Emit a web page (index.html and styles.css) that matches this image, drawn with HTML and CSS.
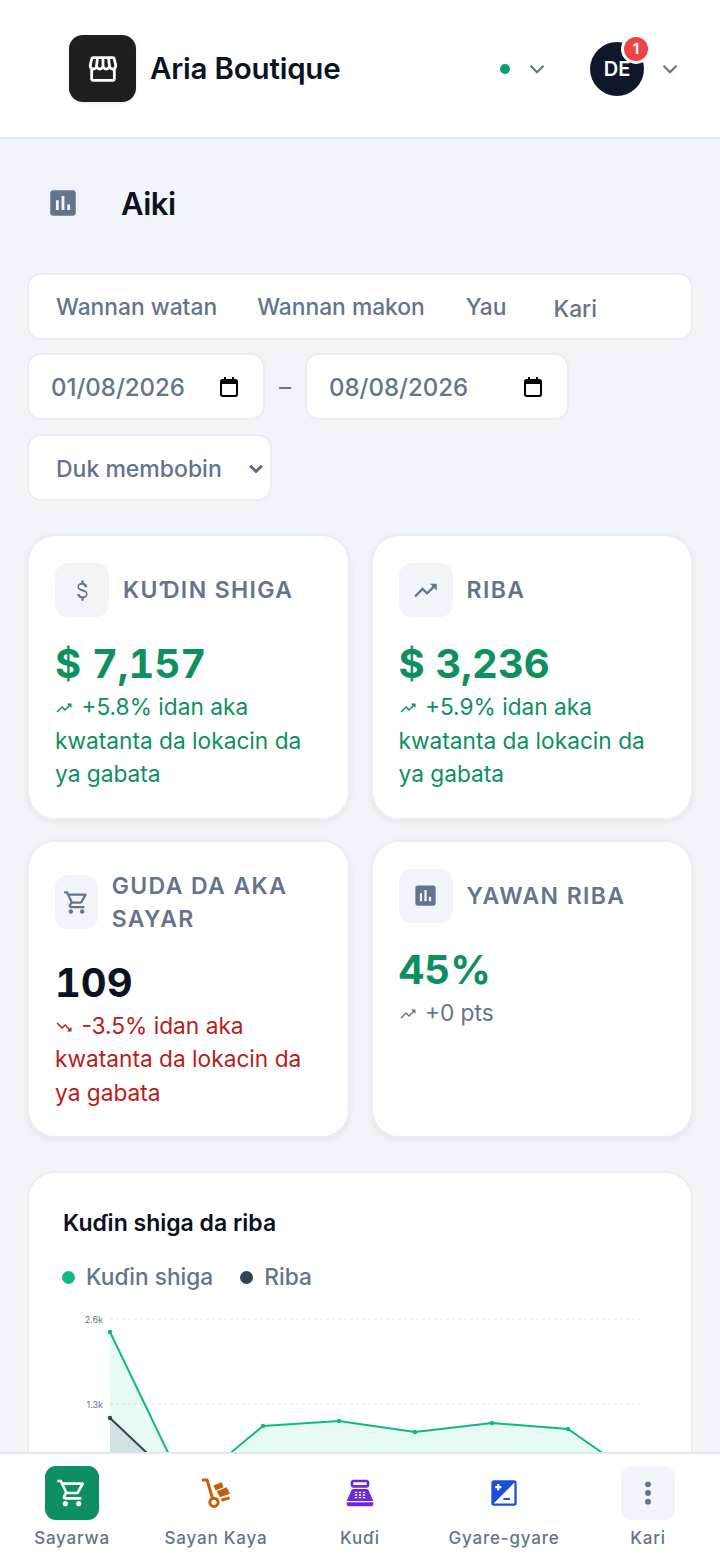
FILE: index.html
```html
<!DOCTYPE html>
<html lang="en">
<head>
    <meta charset="UTF-8">
    <meta name="viewport" content="width=device-width, initial-scale=1.0">
    <title>Aria Boutique</title>
    <link rel="stylesheet" href="styles.css">
</head>
<body>
    <header class="top-bar">
        <div class="brand">
            <div class="brand-logo">
                <svg viewBox="0 0 24 24" class="icon-store"><path d="M21.9 8.89l-1.05-4.37c-.22-.9-1-1.52-1.91-1.52H5.05c-.9 0-1.69.63-1.9 1.52L2.1 8.89c-.24 1.02-.02 2.06.62 2.88.08.11.19.19.28.29V19c0 1.1.9 2 2 2h14c1.1 0 2-.9 2-2v-6.94c.09-.09.2-.18.28-.28.64-.82.87-1.87.62-2.89zm-2.99-3.9l1.05 4.37c.1.42.01.84-.25 1.17-.14.18-.44.47-.94.47-.61 0-1.14-.49-1.21-1.14L16.98 5l1.93-.01zM13 5h1.96l.54 4.52c.05.39-.07.78-.33 1.07-.22.26-.54.41-.95.41-.67 0-1.22-.59-1.22-1.31V5zM8.49 9.52L9.04 5H11v4.69c0 .72-.55 1.31-1.29 1.31-.34 0-.65-.15-.89-.41-.25-.29-.37-.68-.33-1.07zm-4.45-.16L5.05 5h1.97l-.58 4.86c-.08.65-.6 1.14-1.21 1.14-.49 0-.8-.29-.93-.47-.27-.32-.36-.75-.26-1.17zM5 19v-6.03c.08.01.15.03.23.03.87 0 1.66-.36 2.24-.95.6.6 1.4.95 2.31.95.87 0 1.65-.36 2.23-.93.59.57 1.39.93 2.29.93.84 0 1.64-.35 2.24-.95.58.59 1.37.95 2.24.95.08 0 .15-.02.23-.03V19H5z"/></svg>
            </div>
            <span class="brand-name">Aria Boutique</span>
        </div>
        <div class="status">
            <span class="status-dot"></span>
            <svg viewBox="0 0 24 24" class="chevron"><polyline points="6 9 12 15 18 9"/></svg>
        </div>
        <div class="account">
            <div class="avatar">DE<span class="badge">1</span></div>
            <svg viewBox="0 0 24 24" class="chevron"><polyline points="6 9 12 15 18 9"/></svg>
        </div>
    </header>

    <main class="page">
        <div class="page-title">
            <div class="title-icon">
                <svg viewBox="0 0 24 24" class="icon-title"><path d="M19 3H5c-1.1 0-2 .9-2 2v14c0 1.1.9 2 2 2h14c1.1 0 2-.9 2-2V5c0-1.1-.9-2-2-2zM9 17H7v-7h2v7zm4 0h-2V7h2v10zm4 0h-2v-4h2v4z"/></svg>
            </div>
            <h1>Aiki</h1>
        </div>

        <div class="range-tabs">
            <span class="tab">Wannan watan</span>
            <span class="tab">Wannan makon</span>
            <span class="tab">Yau</span>
            <span class="tab tab-more">Kari</span>
        </div>

        <div class="date-row">
            <div class="date-field date-from">
                <span>01/08/2026</span>
                <svg viewBox="0 0 24 24" class="icon-cal"><path d="M7 2v2H5.5C4.1 4 3 5.1 3 6.5v13C3 20.9 4.1 22 5.5 22h13c1.4 0 2.5-1.1 2.5-2.5v-13C21 5.1 19.9 4 18.5 4H17V2h-2v2H9V2H7zM5 9h14v10.5c0 .3-.2.5-.5.5h-13c-.3 0-.5-.2-.5-.5V9z"/></svg>
            </div>
            <span class="date-sep">–</span>
            <div class="date-field date-to">
                <span>08/08/2026</span>
                <svg viewBox="0 0 24 24" class="icon-cal"><path d="M7 2v2H5.5C4.1 4 3 5.1 3 6.5v13C3 20.9 4.1 22 5.5 22h13c1.4 0 2.5-1.1 2.5-2.5v-13C21 5.1 19.9 4 18.5 4H17V2h-2v2H9V2H7zM5 9h14v10.5c0 .3-.2.5-.5.5h-13c-.3 0-.5-.2-.5-.5V9z"/></svg>
            </div>
        </div>

        <div class="select-wrap">
            <select class="shop-select">
                <option>Duk membobin</option>
            </select>
            <svg viewBox="0 0 24 24" class="select-arrow"><polyline points="5 8 12 15 19 8"/></svg>
        </div>

        <section class="stat-grid">
            <div class="stat-card">
                <div class="stat-head">
                    <div class="stat-icon">
                        <svg viewBox="0 0 24 24"><path d="M11.8 10.9c-2.27-.59-3-1.2-3-2.15 0-1.09 1.01-1.85 2.7-1.85 1.78 0 2.44.85 2.5 2.1h2.21c-.07-1.72-1.12-3.3-3.21-3.81V3h-2v2.16c-1.94.42-3.5 1.68-3.5 3.61 0 2.31 1.91 3.46 4.7 4.13 2.5.6 3 1.48 3 2.41 0 .69-.49 1.79-2.7 1.79-2.06 0-2.87-.92-2.98-2.1h-2.2c.12 2.19 1.76 3.42 3.68 3.83V21h2v-2.15c1.95-.37 3.5-1.5 3.5-3.55 0-2.84-2.43-3.81-4.7-4.4z"/></svg>
                    </div>
                    <span class="stat-label">KUƊIN SHIGA</span>
                </div>
                <div class="stat-value green">$ 7,157</div>
                <div class="stat-note green">
                    <svg viewBox="0 0 24 24" class="icon-trend"><path d="M16 6l2.29 2.29-4.88 4.88-4-4L2 16.59 3.41 18l6-6 4 4 6.3-6.29L22 12V6z"/></svg>
                    +5.8% idan aka kwatanta da lokacin da ya gabata
                </div>
            </div>
            <div class="stat-card">
                <div class="stat-head">
                    <div class="stat-icon">
                        <svg viewBox="0 0 24 24"><path d="M16 6l2.29 2.29-4.88 4.88-4-4L2 16.59 3.41 18l6-6 4 4 6.3-6.29L22 12V6z"/></svg>
                    </div>
                    <span class="stat-label">RIBA</span>
                </div>
                <div class="stat-value green">$ 3,236</div>
                <div class="stat-note green">
                    <svg viewBox="0 0 24 24" class="icon-trend"><path d="M16 6l2.29 2.29-4.88 4.88-4-4L2 16.59 3.41 18l6-6 4 4 6.3-6.29L22 12V6z"/></svg>
                    +5.9% idan aka kwatanta da lokacin da ya gabata
                </div>
            </div>
            <div class="stat-card">
                <div class="stat-head">
                    <div class="stat-icon">
                        <svg viewBox="0 0 24 24"><path d="M15.55 13c.75 0 1.41-.41 1.75-1.03l3.58-6.49A.996.996 0 0 0 20.01 4H5.21l-.94-2H1v2h2l3.6 7.59-1.35 2.44C4.52 15.37 5.48 17 7 17h12v-2H7l1.1-2h7.45zM6.16 6h12.15l-2.76 5H8.53L6.16 6zM7 18c-1.1 0-1.99.9-1.99 2S5.9 22 7 22s2-.9 2-2-.9-2-2-2zm10 0c-1.1 0-1.99.9-1.99 2s.89 2 1.99 2 2-.9 2-2-.9-2-2-2z"/></svg>
                    </div>
                    <span class="stat-label">GUDA DA AKA SAYAR</span>
                </div>
                <div class="stat-value">109</div>
                <div class="stat-note red">
                    <svg viewBox="0 0 24 24" class="icon-trend"><path d="M16 18l2.29-2.29-4.88-4.88-4 4L2 7.41 3.41 6l6 6 4-4 6.3 6.29L22 12v6z"/></svg>
                    -3.5% idan aka kwatanta da lokacin da ya gabata
                </div>
            </div>
            <div class="stat-card">
                <div class="stat-head">
                    <div class="stat-icon">
                        <svg viewBox="0 0 24 24"><path d="M19 3H5c-1.1 0-2 .9-2 2v14c0 1.1.9 2 2 2h14c1.1 0 2-.9 2-2V5c0-1.1-.9-2-2-2zM9 17H7v-7h2v7zm4 0h-2V7h2v10zm4 0h-2v-4h2v4z"/></svg>
                    </div>
                    <span class="stat-label">YAWAN RIBA</span>
                </div>
                <div class="stat-value green">45%</div>
                <div class="stat-note grey">
                    <svg viewBox="0 0 24 24" class="icon-trend"><path d="M16 6l2.29 2.29-4.88 4.88-4-4L2 16.59 3.41 18l6-6 4 4 6.3-6.29L22 12V6z"/></svg>
                    +0 pts
                </div>
            </div>
        </section>

        <section class="chart-card">
            <h2>Kuɗin shiga da riba</h2>
            <div class="legend">
                <span class="legend-item"><i class="dot dot-income"></i>Kuɗin shiga</span>
                <span class="legend-item"><i class="dot dot-profit"></i>Riba</span>
            </div>
            <svg class="chart" viewBox="0 0 664 260">
                <line x1="82" y1="13" x2="612" y2="13" class="grid-line"/>
                <line x1="82" y1="98" x2="612" y2="98" class="grid-line"/>
                <text x="75" y="17" class="axis">2.6k</text>
                <text x="75" y="102" class="axis">1.3k</text>
                <polygon points="82,26 158,184 235,120 311,115 387,126 464,117 540,123 616,176 616,260 82,260" class="area-income"/>
                <polygon points="82,112 158,184 235,240 616,240 616,260 82,260" class="area-profit"/>
                <polyline points="82,112 158,184 235,240" class="line-profit"/>
                <polyline points="82,26 158,184 235,120 311,115 387,126 464,117 540,123 616,176" class="line-income"/>
                <circle cx="82" cy="112" r="2.2" class="pt-profit"/>
                <circle cx="82" cy="26" r="2.2" class="pt-income"/>
                <circle cx="235" cy="120" r="2.2" class="pt-income"/>
                <circle cx="311" cy="115" r="2.2" class="pt-income"/>
                <circle cx="387" cy="126" r="2.2" class="pt-income"/>
                <circle cx="464" cy="117" r="2.2" class="pt-income"/>
                <circle cx="540" cy="123" r="2.2" class="pt-income"/>
            </svg>
        </section>
    </main>

    <nav class="bottom-nav">
        <div class="nav-item">
            <div class="nav-icon nav-active">
                <svg viewBox="0 0 24 24"><path d="M15.55 13c.75 0 1.41-.41 1.75-1.03l3.58-6.49A.996.996 0 0 0 20.01 4H5.21l-.94-2H1v2h2l3.6 7.59-1.35 2.44C4.52 15.37 5.48 17 7 17h12v-2H7l1.1-2h7.45zM6.16 6h12.15l-2.76 5H8.53L6.16 6zM7 18c-1.1 0-1.99.9-1.99 2S5.9 22 7 22s2-.9 2-2-.9-2-2-2zm10 0c-1.1 0-1.99.9-1.99 2s.89 2 1.99 2 2-.9 2-2-.9-2-2-2z"/></svg>
            </div>
            <span>Sayarwa</span>
        </div>
        <div class="nav-item">
            <div class="nav-icon nav-orange">
                <svg viewBox="0 0 24 24">
                    <path d="M1.5 2.2h3.8L9.2 15.5" class="dolly-line"/>
                    <circle cx="10.5" cy="19" r="3.1" class="dolly-line"/>
                    <polygon points="10,6.4 16.3,3.9 17.5,7.6 11.8,10.1"/>
                    <polygon points="12.5,10.6 20,7.6 22.5,12.6 15,15.2"/>
                    <polygon points="15.5,16.4 22,14.6 22.5,16.6 16.3,18.6"/>
                </svg>
            </div>
            <span>Sayan Kaya</span>
        </div>
        <div class="nav-item">
            <div class="nav-icon nav-purple">
                <svg viewBox="0 0 24 24"><path d="M17 2H7c-1.1 0-2 .9-2 2v2c0 1.1.9 2 2 2h10c1.1 0 2-.9 2-2V4c0-1.1-.9-2-2-2zm0 4H7V4h10v2zm3 16H4c-1.1 0-2-.9-2-2v-1h20v1c0 1.1-.9 2-2 2zm-1.47-11.81C18.21 9.47 17.49 9 16.7 9H7.3c-.79 0-1.51.47-1.83 1.19L2 18h20l-3.47-7.81zM9.5 16h-1c-.28 0-.5-.22-.5-.5s.22-.5.5-.5h1c.28 0 .5.22.5.5s-.22.5-.5.5zm0-2h-1c-.28 0-.5-.22-.5-.5s.22-.5.5-.5h1c.28 0 .5.22.5.5s-.22.5-.5.5zm0-2h-1c-.28 0-.5-.22-.5-.5s.22-.5.5-.5h1c.28 0 .5.22.5.5s-.22.5-.5.5zm3 4h-1c-.28 0-.5-.22-.5-.5s.22-.5.5-.5h1c.28 0 .5.22.5.5s-.22.5-.5.5zm0-2h-1c-.28 0-.5-.22-.5-.5s.22-.5.5-.5h1c.28 0 .5.22.5.5s-.22.5-.5.5zm0-2h-1c-.28 0-.5-.22-.5-.5s.22-.5.5-.5h1c.28 0 .5.22.5.5s-.22.5-.5.5zm3 4h-1c-.28 0-.5-.22-.5-.5s.22-.5.5-.5h1c.28 0 .5.22.5.5s-.22.5-.5.5zm0-2h-1c-.28 0-.5-.22-.5-.5s.22-.5.5-.5h1c.28 0 .5.22.5.5s-.22.5-.5.5zm0-2h-1c-.28 0-.5-.22-.5-.5s.22-.5.5-.5h1c.28 0 .5.22.5.5s-.22.5-.5.5z"/></svg>
            </div>
            <span>Kuɗi</span>
        </div>
        <div class="nav-item">
            <div class="nav-icon nav-blue">
                <svg viewBox="0 0 24 24">
                    <rect x="2.5" y="2.5" width="19" height="19" rx="2"/>
                    <polygon points="19.8,4.2 19.8,19.8 4.2,19.8" fill="#fff"/>
                    <path d="M5.4 6.8h1.5V5.3h1.6v1.5H10v1.6H8.5v1.5H6.9V8.4H5.4z" fill="#fff"/>
                    <rect x="11.5" y="15.7" width="5" height="1.5"/>
                </svg>
            </div>
            <span>Gyare-gyare</span>
        </div>
        <div class="nav-item">
            <div class="nav-icon nav-more">
                <svg viewBox="0 0 24 24"><circle cx="12" cy="5.5" r="2.2"/><circle cx="12" cy="12" r="2.2"/><circle cx="12" cy="18.5" r="2.2"/></svg>
            </div>
            <span>Kari</span>
        </div>
    </nav>
</body>
</html>
```

FILE: styles.css
```css
* {
    box-sizing: border-box;
}
html, body {
    height: 1561px;
    overflow: hidden;
}
body {
    margin: 0;
    background: #f1f5f9;
    font-family: Inter, "Noto Sans", sans-serif;
    color: #0b1220;
}

/* top bar */
.top-bar {
    display: flex;
    align-items: center;
    height: 139px;
    padding: 0 37px 0 69px;
    background: #fff;
    border-bottom: 2px solid #e2e8f0;
}
.brand {
    display: flex;
    align-items: center;
    gap: 14px;
    flex: 1;
}
.brand-logo {
    display: flex;
    align-items: center;
    justify-content: center;
    width: 67px;
    height: 67px;
    border-radius: 14px;
    background: #1f1f1f;
    box-shadow: 0 1px 3px rgba(0, 0, 0, 0.1);
}
.icon-store {
    width: 34px;
    height: 34px;
    fill: #fff;
}
.brand-name {
    margin-top: -2px;
    font-size: 29.5px;
    font-weight: 600;
    letter-spacing: -0.2px;
}
.status {
    display: flex;
    align-items: center;
    gap: 14px;
    margin-right: 40px;
}
.status-dot {
    width: 10px;
    height: 10px;
    border-radius: 50%;
    background: #0f9d68;
}
.chevron {
    width: 26px;
    height: 26px;
    fill: none;
    stroke: #64748b;
    stroke-width: 2;
}
.account {
    display: flex;
    align-items: center;
    gap: 13px;
}
.avatar {
    position: relative;
    display: flex;
    align-items: center;
    justify-content: center;
    width: 54px;
    height: 54px;
    border-radius: 50%;
    background: #0f172a;
    color: #fff;
    font-size: 20px;
    font-weight: 600;
}
.badge {
    position: absolute;
    top: -8px;
    right: -7px;
    display: flex;
    align-items: center;
    justify-content: center;
    width: 30px;
    height: 30px;
    border-radius: 50%;
    border: 3px solid #fff;
    background: #ef4444;
    color: #fff;
    font-size: 15px;
    font-weight: 700;
}

/* page */
.page {
    padding: 29px 27px 0;
}
.page-title {
    display: flex;
    align-items: center;
    gap: 22px;
    height: 70px;
    margin-bottom: 35px;
}
.title-icon {
    display: flex;
    align-items: center;
    justify-content: center;
    width: 72px;
    height: 70px;
    border-radius: 14px;
    background: #f0f4f9;
}
.icon-title {
    width: 34px;
    height: 34px;
    fill: #64748b;
}
h1 {
    margin: 0;
    font-size: 31px;
    font-weight: 600;
    letter-spacing: -0.5px;
}

.range-tabs {
    display: flex;
    align-items: center;
    height: 67px;
    padding-left: 27px;
    background: #fff;
    border: 2px solid #e9eef4;
    border-radius: 14px;
    color: #64748b;
    font-size: 22.8px;
    font-weight: 500;
}
.tab {
    margin-right: 41px;
    margin-top: -1px;
}
.tab:first-child {
    margin-right: 40px;
}
.tab:nth-child(3) {
    margin-right: 47px;
}
.tab-more {
    margin-top: 3px;
}
.date-row {
    display: flex;
    align-items: center;
    margin-top: 13px;
}
.date-field {
    display: flex;
    align-items: center;
    justify-content: space-between;
    height: 67px;
    padding: 0 22px;
    background: #fff;
    border: 2px solid #e9eef4;
    border-radius: 14px;
    color: #64748b;
    font-size: 24px;
    font-weight: 500;
}
.date-field span {
    margin-top: 2px;
}
.date-from {
    width: 238px;
}
.date-to {
    width: 264px;
}
.icon-cal {
    width: 24px;
    height: 24px;
    fill: #000;
}
.date-sep {
    width: 40px;
    text-align: center;
    color: #64748b;
    font-size: 24px;
}
.select-wrap {
    position: relative;
    width: 245px;
    margin-top: 14px;
}
.shop-select {
    display: block;
    width: 100%;
    height: 67px;
    padding: 2px 0 0 27px;
    appearance: none;
    background: #fff;
    border: 2px solid #e9eef4;
    border-radius: 14px;
    color: #64748b;
    font-family: Inter, "Noto Sans", sans-serif;
    font-size: 23px;
    font-weight: 500;
}
.select-arrow {
    position: absolute;
    top: 25px;
    right: 6px;
    width: 20px;
    height: 20px;
    fill: none;
    stroke: #5b6b82;
    stroke-width: 3.5;
    pointer-events: none;
}

/* stat cards */
.stat-grid {
    display: grid;
    grid-template-columns: 1fr 1fr;
    gap: 20px 21px;
    margin-top: 33px;
}
.stat-card {
    padding: 27px 26px 27px;
    background: #fff;
    border: 2px solid #e9eef4;
    border-radius: 28px;
    box-shadow: 0 2px 6px rgba(15, 23, 42, 0.06);
}
.stat-head {
    display: flex;
    align-items: center;
    gap: 14px;
}
.stat-icon {
    display: flex;
    align-items: center;
    justify-content: center;
    width: 54px;
    height: 54px;
    border-radius: 13px;
    background: #f1f5f9;
}
.stat-icon svg {
    flex: none;
    width: 27px;
    height: 27px;
    fill: #64748b;
}
.stat-label {
    padding-top: 1px;
    color: #64748b;
    font-size: 23px;
    font-weight: 600;
    letter-spacing: 1.4px;
    line-height: 33px;
}
.stat-value {
    margin-top: 23px;
    font-size: 40px;
    font-weight: 700;
    line-height: 48px;
    font-variant-numeric: tabular-nums;
}
.stat-note {
    margin-top: 2px;
    font-size: 22.7px;
    line-height: 33.5px;
}
.icon-trend {
    width: 18px;
    height: 18px;
    margin-right: 2px;
    vertical-align: -2px;
    fill: currentColor;
}
.green {
    color: #0e8f60;
}
.red {
    color: #b91c1c;
}
.grey {
    color: #64748b;
}

/* chart */
.chart-card {
    height: 400px;
    margin-top: 33px;
    padding: 36px 0 0;
    background: #fff;
    border: 2px solid #e9eef4;
    border-radius: 28px;
}
.chart-card h2 {
    margin: 0 0 0 34px;
    color: #0a0f1c;
    font-size: 23px;
    font-weight: 600;
    line-height: 28px;
}
.legend {
    display: flex;
    gap: 27px;
    margin: 26px 0 0 33px;
    color: #64748b;
    font-size: 22.7px;
    font-weight: 500;
    line-height: 28px;
}
.legend-item {
    display: flex;
    align-items: center;
    gap: 11px;
}
.dot {
    width: 13px;
    height: 13px;
    border-radius: 50%;
}
.dot-income {
    background: #10b981;
}
.dot-profit {
    background: #334155;
}
.chart {
    display: block;
    width: 664px;
    height: 260px;
    margin: 15px 0 0 -1px;
}
.grid-line {
    stroke: #e2e8f0;
    stroke-width: 1;
    stroke-dasharray: 3 3;
}
.axis {
    fill: #64748b;
    font-size: 9px;
    text-anchor: end;
}
.area-income {
    fill: #14d08f;
    fill-opacity: 0.1;
}
.area-profit {
    fill: #334155;
    fill-opacity: 0.12;
}
.line-income {
    fill: none;
    stroke: #10b981;
    stroke-width: 2;
}
.line-profit {
    fill: none;
    stroke: #334155;
    stroke-width: 2;
}
.pt-income {
    fill: #10b981;
}
.pt-profit {
    fill: #334155;
}

/* bottom nav */
.bottom-nav {
    position: fixed;
    left: 0;
    right: 0;
    bottom: 0;
    display: grid;
    grid-template-columns: repeat(5, 1fr);
    height: 109px;
    padding-top: 12px;
    background: #fff;
    border-top: 2px solid #e2e8f0;
}
.nav-item {
    display: flex;
    flex-direction: column;
    align-items: center;
    gap: 8px;
    color: #64748b;
    font-size: 17px;
    font-weight: 500;
    letter-spacing: 0.8px;
}
.nav-icon {
    display: flex;
    align-items: center;
    justify-content: center;
    width: 54px;
    height: 54px;
    border-radius: 11px;
}
.nav-icon svg {
    width: 32px;
    height: 32px;
}
.nav-active {
    background: #0e8f60;
    fill: #fff;
}
.nav-orange {
    fill: #c2630a;
}
.dolly-line {
    fill: none;
    stroke: #c2630a;
    stroke-width: 2.3;
}
.nav-purple {
    fill: #6d28d9;
}
.nav-blue {
    fill: #1d4ed8;
}
.nav-more {
    background: #f1f5f9;
    fill: #64748b;
}
```
